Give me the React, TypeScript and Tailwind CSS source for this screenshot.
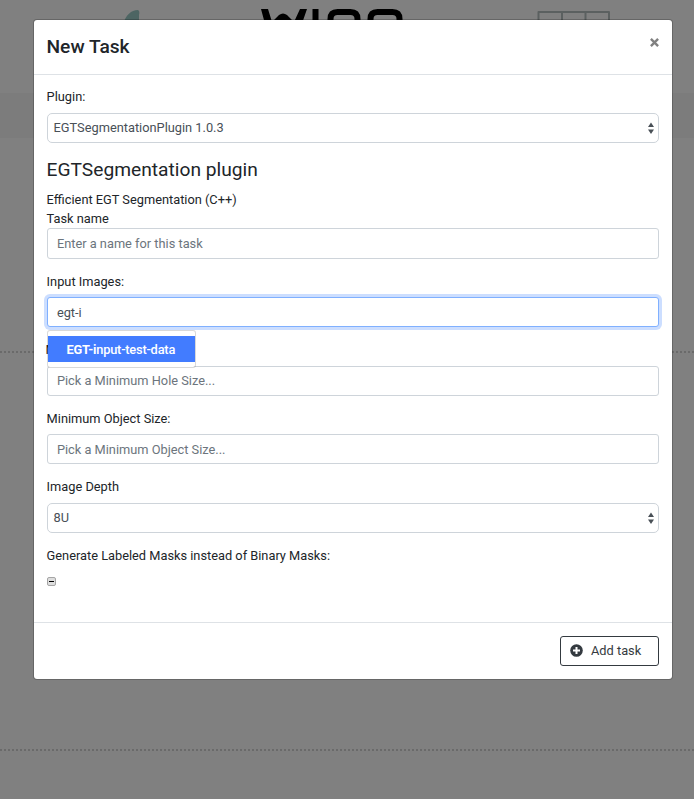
import type { ReactNode } from "react";

function Arrows() {
  return (
    <svg width="6" height="12" viewBox="0 0 6 12" className="-mt-px shrink-0 fill-[#495057]">
      <path d="M3 0.500 6 5H0zM3 12 0 7.500h6z" />
    </svg>
  );
}

function Label({ children }: { children: ReactNode }) {
  return <div className="h-[20px] leading-[20px]">{children}</div>;
}

function Select({ value }: { value: string }) {
  return (
    <div className="flex h-[30px] items-center justify-between rounded-[5px] border border-[#ced4da] pr-1 pl-1.5 text-[#495057]">
      <span>{value}</span>
      <Arrows />
    </div>
  );
}

function Input({ placeholder, className = "h-[30px]" }: { placeholder: string; className?: string }) {
  return (
    <input
      placeholder={placeholder}
      className={"block w-full rounded-[3px] border border-[#ced4da] bg-white px-[9.3px] text-[#495057] placeholder:text-[#6c757d] " + className}
    />
  );
}

function Page() {
  return (
    <div className="flex h-[799px] flex-col bg-[#808080]">
      <div className="h-[93px] shrink-0">
        <svg width="694" height="93" viewBox="0 0 694 93">
          <path d="M123 24C126 15 131 10 138 10Q140 11 139 15V24z" fill="#4d6563" />
          <path d="M261 9h7l4 13 7-7q4-3 8 0l7 7 6-13h7l-9 26h-8l-7-12-7 12h-8z" />
          <path d="M312.500 9h6v26h-6z" />
          <g stroke="#000" strokeWidth="6" fill="none">
            <path d="M330.500 36V19q0-7 7-7h13q7 0 7 7v17M370.500 36V19q0-7 7-7h15q7 0 7 7v17" />
          </g>
          <path d="M538.500 40V12h70.500v28M562 12v28M585.500 12v28" fill="none" stroke="#5b6060" strokeWidth="2" strokeLinejoin="round" />
        </svg>
      </div>
      <div className="h-[45px] shrink-0 bg-[#7c7c7c]" />
      <div className="h-[213px] shrink-0" />
      <div className="h-[400px] shrink-0 border-y-2 border-dotted border-[#6a6a6a]" />
    </div>
  );
}

export default function App() {
  return (
    <div className="relative h-[799px] w-[694px] overflow-hidden font-['Roboto',sans-serif] text-[12.8px] text-[#212529]">
      <Page />
      <div className="absolute top-[19px] left-[33px] flex h-[661px] w-[640px] flex-col rounded-[4px] border border-black/20 bg-white bg-clip-padding">
        <header className="flex h-[55px] shrink-0 justify-between border-b border-[#dee2e6] pr-[13px] pl-[12.5px] pt-[12px]">
          <h1 className="text-[19.2px] leading-[29px] font-medium">New Task</h1>
          <svg width="9" height="9" viewBox="0 0 9 9" className="mt-[6px]" stroke="#808080" strokeWidth="2.400">
            <path d="M0.900 0.900l7.200 7.200M8.100 0.900L0.900 8.100" />
          </svg>
        </header>
        <main className="flex h-[548px] shrink-0 flex-col border-b border-[#dee2e6] px-[12.6px] pt-[12px]">
          <Label>Plugin:</Label>
          <div className="mt-[6px]">
            <Select value="EGTSegmentationPlugin 1.0.3" />
          </div>
          <h2 className="mt-[15px] h-[24px] text-[19.2px] leading-[24px]">EGTSegmentation plugin</h2>
          <div className="mt-[8px] leading-[20px]">Efficient EGT Segmentation (C++)</div>
          <div className="h-[18px] leading-[18px]">Task name</div>
          <Input placeholder="Enter a name for this task" className="h-[31px]" />
          <div className="mt-[13px]">
            <Label>Input Images:</Label>
          </div>
          <div className="relative mt-[5px]">
            <input
              defaultValue="egt-i"
              className="block h-[30px] w-full rounded-[3px] border border-[#80b0ff] bg-white px-[9.3px] text-[#495057] shadow-[0_0_0_3px_#ccdeff] outline-none"
            />
            <div className="absolute top-[33px] left-0 z-10 w-[149px] rounded-[3px] border border-black/15 bg-white bg-clip-padding py-[5px]">
              <div className="h-[26px] bg-[#427cff] pl-[19px] leading-[27px] font-medium tracking-[-0.2px] whitespace-nowrap text-white">
                <b className="font-bold">EGT-i</b>nput-test-data
              </div>
            </div>
          </div>
          <div className="mt-[13px] -ml-px">
            <Label>Minimum Hole Size:</Label>
          </div>
          <div className="mt-[6px]">
            <Input placeholder="Pick a Minimum Hole Size..." className="h-[30px] pb-[2px]" />
          </div>
          <div className="mt-[13px]">
            <Label>Minimum Object Size:</Label>
          </div>
          <div className="mt-[5px]">
            <Input placeholder="Pick a Minimum Object Size..." />
          </div>
          <div className="mt-[13px]">
            <Label>Image Depth</Label>
          </div>
          <div className="mt-[6px]">
            <Select value="8U" />
          </div>
          <div className="mt-[13px]">
            <Label>Generate Labeled Masks instead of Binary Masks:</Label>
          </div>
          <div className="mt-[11px] flex size-[9px] items-center justify-center rounded-[2px] border border-[#a5a5a5] bg-[#dedede]">
            <div className="h-px w-[5px] bg-black" />
          </div>
        </main>
        <footer className="flex justify-end px-[13px] pt-[13px]">
          <button className="flex h-[30px] w-[99px] items-center rounded-[3px] border border-[#343a40] pl-[9px] text-[#343a40]">
            <svg width="13" height="13" viewBox="0 0 13 13" className="-mt-px">
              <circle cx="6.500" cy="6.500" r="6.300" fill="#343a40" />
              <path d="M6.500 3v7M3 6.500h7" stroke="#fff" strokeWidth="2" />
            </svg>
            <span className="ml-2">Add task</span>
          </button>
        </footer>
      </div>
    </div>
  );
}
